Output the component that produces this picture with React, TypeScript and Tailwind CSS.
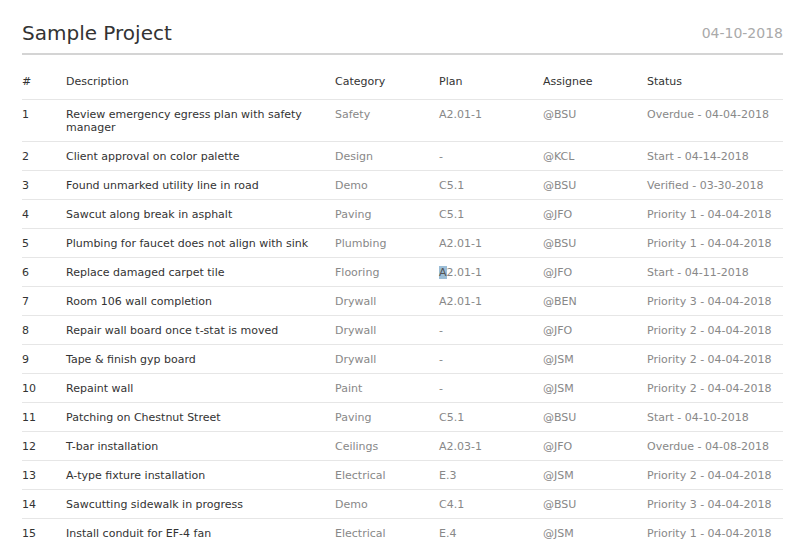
const rows: [string, string, string, string, string, string][] = [
  ['1', 'Review emergency egress plan with safety manager', 'Safety', 'A2.01-1', '@BSU', 'Overdue - 04-04-2018'],
  ['2', 'Client approval on color palette', 'Design', '-', '@KCL', 'Start - 04-14-2018'],
  ['3', 'Found unmarked utility line in road', 'Demo', 'C5.1', '@BSU', 'Verified - 03-30-2018'],
  ['4', 'Sawcut along break in asphalt', 'Paving', 'C5.1', '@JFO', 'Priority 1 - 04-04-2018'],
  ['5', 'Plumbing for faucet does not align with sink', 'Plumbing', 'A2.01-1', '@BSU', 'Priority 1 - 04-04-2018'],
  ['6', 'Replace damaged carpet tile', 'Flooring', 'A2.01-1', '@JFO', 'Start - 04-11-2018'],
  ['7', 'Room 106 wall completion', 'Drywall', 'A2.01-1', '@BEN', 'Priority 3 - 04-04-2018'],
  ['8', 'Repair wall board once t-stat is moved', 'Drywall', '-', '@JFO', 'Priority 2 - 04-04-2018'],
  ['9', 'Tape & finish gyp board', 'Drywall', '-', '@JSM', 'Priority 2 - 04-04-2018'],
  ['10', 'Repaint wall', 'Paint', '-', '@JSM', 'Priority 2 - 04-04-2018'],
  ['11', 'Patching on Chestnut Street', 'Paving', 'C5.1', '@BSU', 'Start - 04-10-2018'],
  ['12', 'T-bar installation', 'Ceilings', 'A2.03-1', '@JFO', 'Overdue - 04-08-2018'],
  ['13', 'A-type fixture installation', 'Electrical', 'E.3', '@JSM', 'Priority 2 - 04-04-2018'],
  ['14', 'Sawcutting sidewalk in progress', 'Demo', 'C4.1', '@BSU', 'Priority 3 - 04-04-2018'],
  ['15', 'Install conduit for EF-4 fan', 'Electrical', 'E.4', '@JSM', 'Priority 1 - 04-04-2018'],
]

export default function App() {
  return (
    <div className="w-[805px] h-[546px] overflow-hidden bg-white px-[22px] font-[DejaVu_Sans,sans-serif] text-[11px] leading-[13px]">
      <div className="flex items-center justify-between border-b-2 border-[#d4d4d4] pt-[20px] pb-[7px]">
        <h1 className="text-[20px] leading-[26px] text-[#333]">Sample Project</h1>
        <span className="text-[14px] leading-[26px] text-[#aaa]">04-10-2018</span>
      </div>
      <table className="mt-[12px] w-full table-fixed border-collapse">
        <colgroup>
          <col className="w-[44px]" />
          <col className="w-[269px]" />
          <col className="w-[104px]" />
          <col className="w-[104px]" />
          <col className="w-[104px]" />
          <col />
        </colgroup>
        <thead>
          <tr className="border-b border-[#e6e6e6] text-left text-[#333]">
            {['#', 'Description', 'Category', 'Plan', 'Assignee', 'Status'].map((h) => (
              <th key={h} className="pt-2 pb-[11px] font-normal">{h}</th>
            ))}
          </tr>
        </thead>
        <tbody>
          {rows.map((r) => (
            <tr key={r[0]} className="border-b border-[#e6e6e6] align-top">
              <td className="pt-2 pb-[7px] text-[#333]">{r[0]}</td>
              <td className="pt-2 pb-[7px] pr-4 text-[#333]">{r[1]}</td>
              <td className="pt-2 pb-[7px] text-[#888]">{r[2]}</td>
              <td className="pt-2 pb-[7px] text-[#888]">
                {r[0] === '6' ? (
                  <>
                    <span className="bg-[#9bbdd6] text-[#555]">A</span>2.01-1
                  </>
                ) : (
                  r[3]
                )}
              </td>
              <td className="pt-2 pb-[7px] text-[#888]">{r[4]}</td>
              <td className="pt-2 pb-[7px] text-[#888]">{r[5]}</td>
            </tr>
          ))}
        </tbody>
      </table>
    </div>
  )
}
